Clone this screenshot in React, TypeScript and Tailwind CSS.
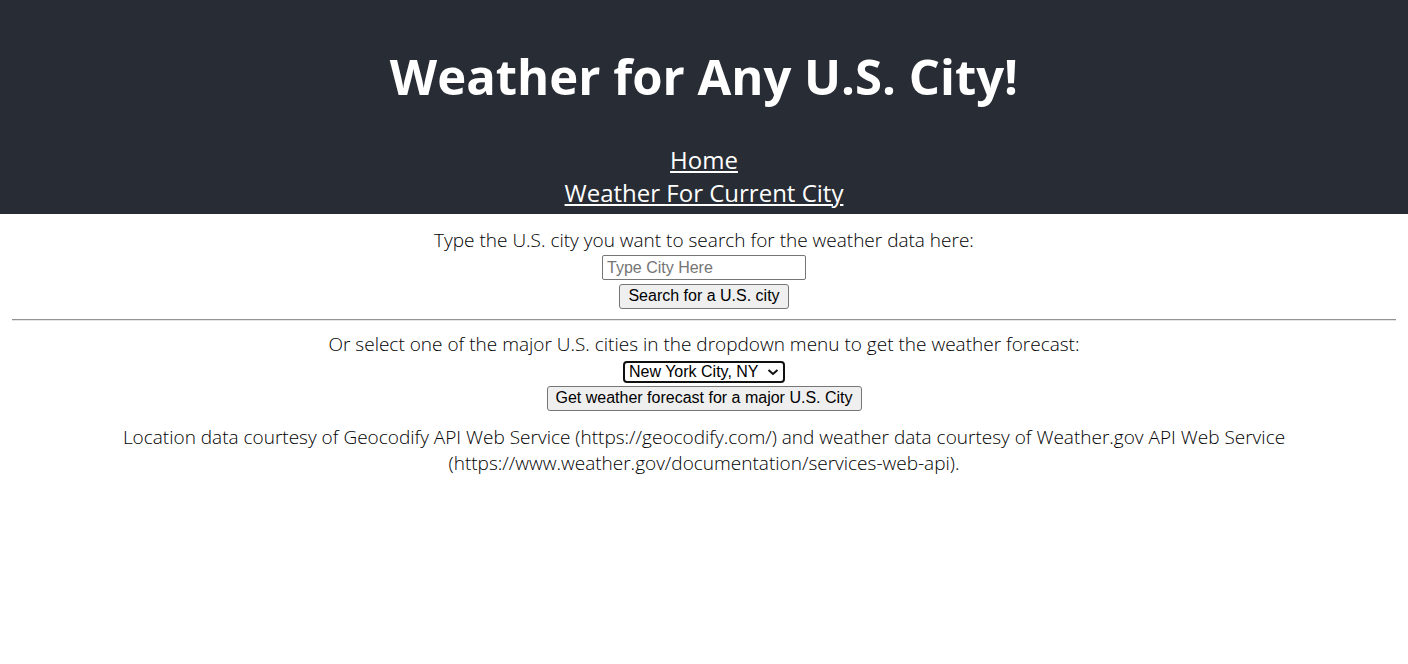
import { useState } from "react";

const cities = ["New York City, NY", "Los Angeles, CA", "Chicago, IL"];

const buttonClass =
  "h-[25px] rounded-[3px] border border-[#767676] bg-[#efefef] px-2 pb-0.5 font-['Liberation_Sans',sans-serif] text-base font-normal leading-5 text-black";

export default function App() {
  const [city, setCity] = useState("");
  const [major, setMajor] = useState(cities[0]);

  return (
    <div className="min-h-screen bg-white text-center font-['Open_Sans',sans-serif] text-black">
      <header className="bg-[#282c34] pt-[41px] pb-[5px] text-white">
        <h1 className="text-[49px] leading-[70px] font-bold">Weather for Any U.S. City!</h1>
        <nav className="mt-8 flex flex-col items-center text-2xl leading-[33px]">
          <a href="#home" className="underline decoration-2 underline-offset-2">Home</a>
          <a href="#current" className="underline decoration-2 underline-offset-2">Weather For Current City</a>
        </nav>
      </header>
      <main className="px-3 pt-[13px] text-[19px] leading-[26px] font-light">
        <form className="flex flex-col items-center" onSubmit={(e) => e.preventDefault()}>
          <label htmlFor="city">Type the U.S. city you want to search for the weather data here:</label>
          <input
            id="city"
            type="text"
            value={city}
            onChange={(e) => setCity(e.target.value)}
            placeholder="Type City Here"
            className="mt-0.5 h-[25px] w-[204px] rounded-[2px] border border-[#767676] px-1 font-['Liberation_Sans',sans-serif] text-base font-normal placeholder:text-[#757575]"
          />
          <button type="submit" className={`mt-1 ${buttonClass}`}>Search for a U.S. city</button>
        </form>
        <hr className="my-[10px] h-[2px] border-t border-b border-t-[#949494] border-b-[#e4e4e4]" />
        <form className="flex flex-col items-center" onSubmit={(e) => e.preventDefault()}>
          <label htmlFor="major">
            Or select one of the major U.S. cities in the dropdown menu to get the weather forecast:
          </label>
          <div className="relative mt-1 flex">
            <select
              id="major"
              value={major}
              onChange={(e) => setMajor(e.target.value)}
              className="h-[22px] w-[162px] appearance-none rounded-[4px] border-2 border-[#101010] bg-white pl-1 font-['Liberation_Sans',sans-serif] text-base leading-4 font-normal"
            >
              {cities.map((name) => (
                <option key={name}>{name}</option>
              ))}
            </select>
            <svg
              viewBox="0 0 12 8"
              className="pointer-events-none absolute top-[7px] right-[6px] h-2 w-3"
              fill="none"
              stroke="#101010"
              strokeWidth="2"
              aria-hidden="true"
            >
              <path d="M1.500 2 6 6l4.500-4" />
            </svg>
          </div>
          <button type="submit" className={`mt-[3px] ${buttonClass}`}>Get weather forecast for a major U.S. City</button>
        </form>
        <p className="mx-auto mt-[13px] max-w-[1200px]">
          Location data courtesy of Geocodify API Web Service (https://geocodify.com/) and weather data courtesy of
          Weather.gov API Web Service (https://www.weather.gov/documentation/services-web-api).
        </p>
      </main>
    </div>
  );
}
